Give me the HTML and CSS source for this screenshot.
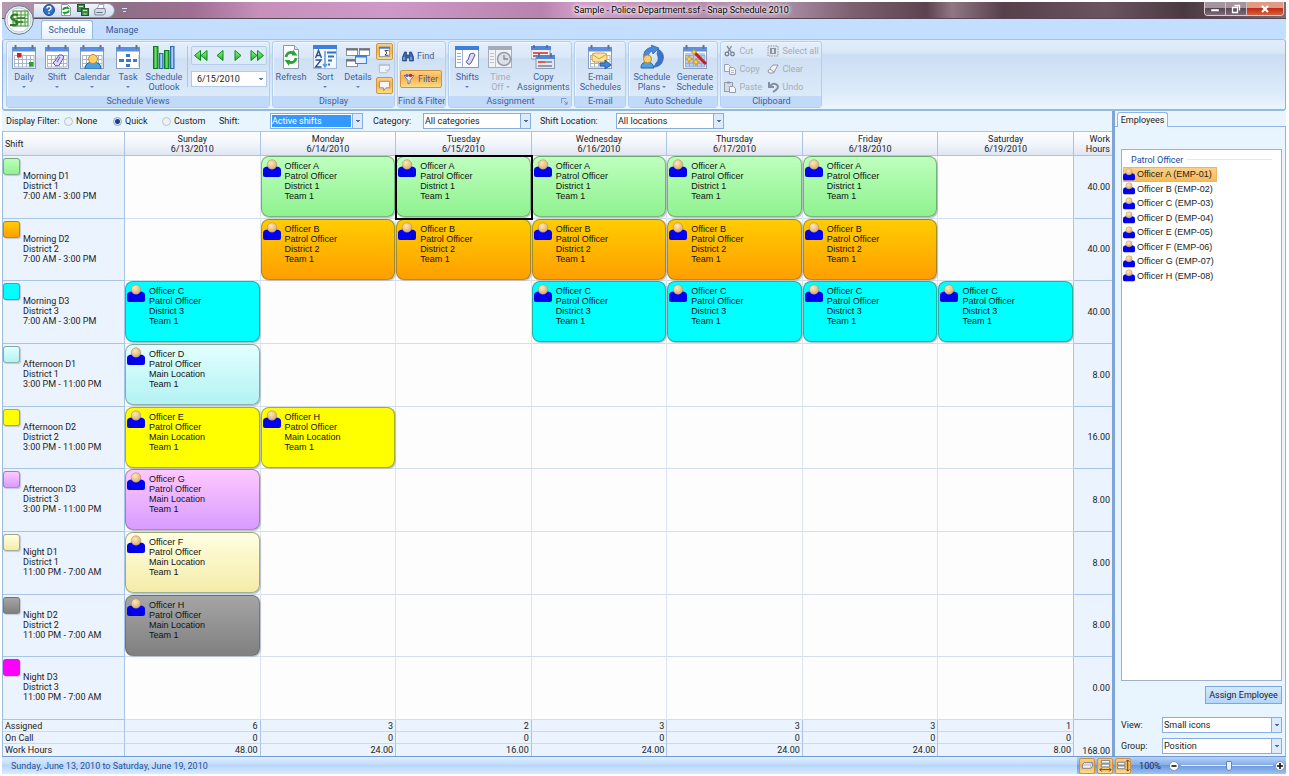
FILE: index.html
```html
<!DOCTYPE html>
<html lang="en">
<head>
<meta charset="utf-8">
<title>Sample - Police Department.ssf - Snap Schedule 2010</title>
<link rel="stylesheet" href="styles.css">
</head>
<body>
<svg class="defs" aria-hidden="true">
  <defs>
    <radialGradient id="skin" cx=".4" cy=".35" r=".7"><stop offset="0" stop-color="#ffe9bd"/><stop offset="1" stop-color="#d9a866"/></radialGradient>
    <linearGradient id="grn" x1="0" x2="0" y1="0" y2="1"><stop offset="0" stop-color="#9af58a"/><stop offset="1" stop-color="#18b02a"/></linearGradient>
    <linearGradient id="grnBar"><stop offset="0" stop-color="#0d9a24"/><stop offset=".5" stop-color="#7be36b"/><stop offset="1" stop-color="#0d8a20"/></linearGradient>
    <linearGradient id="bluBar"><stop offset="0" stop-color="#3b7fd0"/><stop offset=".5" stop-color="#bcdcff"/><stop offset="1" stop-color="#3b7fd0"/></linearGradient>
    <symbol id="person" viewBox="0 0 18 19"><path d="M0 11q0-3 4-3.500h10q4 .5 4 3.500v5q0 2-2 2H2q-2 0-2-2z" fill="#0000f4"/><path d="M3.500 12v6M14.500 12v6" stroke="#0000b0" stroke-width=".7"/><circle cx="9" cy="5.500" r="4.800" fill="url(#skin)" stroke="#a98a60" stroke-width=".5"/></symbol>
    <symbol id="cal" viewBox="0 0 24 24"><rect x=".5" y="2.500" width="23" height="21" fill="#fff" stroke="#8a9cba"/><rect x="0" y="2" width="24" height="4.500" fill="#5b90e4"/><path d="M2 10.500h20M2 14.500h20M2 18.500h20M2 22h20M2.500 10v12M6.500 10v12M10.500 10v12M14.500 10v12M18.500 10v12M22 10v12" stroke="#a9b6ca" fill="none"/><path d="M3.500 0v4M20.500 0v4" stroke="#6d7480" stroke-width="2"/></symbol>
  </defs>
</svg>

<div class="app">
  <header class="titlebar">
    <button class="orb" aria-label="Application menu">
      <svg viewBox="0 0 30 30"><circle cx="15" cy="15" r="14.300" fill="#e9edf3" stroke="#6b7d96"/><circle cx="15" cy="15" r="12" fill="#f9fbfd" stroke="#c3cedb"/><rect x="9" y="6" width="15" height="15" fill="#e7f4df" stroke="#3d8a35"/><path d="M9 10h15M9 13.500h15M9 17h15M13 6v15M17 6v15M21 6v15" stroke="#4f9a45"/><path d="M14 10c-7-2-9 4-4 5s5 6-4 5" fill="none" stroke="#2c7a28" stroke-width="2.200"/><path d="M13 13h8M11 17h8" stroke="#2c7a28" stroke-width="1.500"/></svg>
    </button>
    <div class="quick">
      <button aria-label="Help"><svg viewBox="0 0 12 12"><circle cx="6" cy="6" r="5.500" fill="#2f6fc4" stroke="#1c4b91"/><path d="M4 4.500q0-2 2-2t2 1.800q0 1-2 2.200v.8M6 8.500v1.300" fill="none" stroke="#fff" stroke-width="1.400"/></svg></button>
      <button aria-label="Refresh"><svg viewBox="0 0 12 12"><path d="M1.500.5h6l3 3v8h-9z" fill="#fff" stroke="#8b98aa"/><path d="M3 6q1-3 5-2M9 6.500q-1 3-5 2" fill="none" stroke="#1d9b2c" stroke-width="1.800"/><path d="M7 2l3 3H7zM5 11L2 8h3z" fill="#1d9b2c"/></svg></button>
      <button aria-label="Save all"><svg viewBox="0 0 12 12"><rect x=".5" y=".5" width="7" height="7" fill="#3f8a4a" stroke="#1d5a2a"/><rect x="4.500" y="4.500" width="7" height="7" fill="#3f8a4a" stroke="#1d5a2a"/><path d="M2 2.500h4M6 6.500h4M6.500 10h3" stroke="#c9e8c8"/></svg></button>
      <button aria-label="Print"><svg viewBox="0 0 12 12"><path d="M3 5l2-4.500h5L9 5z" fill="#fff" stroke="#8089a0" stroke-width=".7"/><path d="M.5 6l2-1.500h8.500l.5 4-2 2.500H1z" fill="#d7dbe6" stroke="#6c748c" stroke-width=".8"/><path d="M2.500 8.500h6" stroke="#68708a"/></svg></button>
    </div>
    <span class="quick-more"></span>
    <h1>Sample - Police Department.ssf - Snap Schedule 2010</h1>
    <div class="winbtns">
      <button aria-label="Minimize"><svg viewBox="0 0 10 10"><rect x="1" y="5" width="8" height="2.500" fill="#fff" stroke="#444" stroke-width=".4"/></svg></button>
      <button aria-label="Restore"><svg viewBox="0 0 10 10"><path d="M3.500 1.500h5v5M1.500 3.500h5v5h-5z" fill="none" stroke="#fff" stroke-width="1.300"/></svg></button>
      <button class="close" aria-label="Close"><svg viewBox="0 0 10 10"><path d="M2 2l6 6M8 2L2 8" stroke="#fff" stroke-width="2.200"/></svg></button>
    </div>
  </header>

  <nav class="tabs">
    <button class="active">Schedule</button>
    <button>Manage</button>
  </nav>

  <div class="ribbon">
    <section class="group">
      <div class="tools">
        <button class="big w32"><svg viewBox="0 0 24 24"><use href="#cal"/><rect x="5" y="8" width="4.500" height="4.500" fill="#cf1f1f"/><rect x="17" y="17" width="4.500" height="4.500" fill="#26a32f"/></svg>Daily<i class="arrow"></i></button>
        <button class="big w34"><svg viewBox="0 0 24 24"><use href="#cal"/><path d="M9 19q-2-2 1-3l4-6q4-1 5 2l-4 7q-3 4-6 0zM12 17l3-5" fill="#dcd8fa" stroke="#5a50a8"/></svg>Shift<i class="arrow"></i></button>
        <button class="big w36"><svg viewBox="0 0 24 24"><use href="#cal"/><path d="M5 24q0-7 8-7t8 7z" fill="#4aa3e0" stroke="#235f9f"/><circle cx="13" cy="14" r="4.500" fill="#fbd06a" stroke="#c98a2a"/></svg>Calendar<i class="arrow"></i></button>
        <button class="big w36"><svg viewBox="0 0 24 24"><use href="#cal"/><rect x="2" y="8" width="20" height="15" fill="#fff"/><path d="M3 15.500h18" stroke="#3d78c8" stroke-width="3" stroke-dasharray="5 2"/><rect x="10" y="9" width="4" height="3" fill="#3d78c8"/><rect x="10" y="19" width="4" height="3" fill="#3d78c8"/></svg>Task<i class="arrow"></i></button>
        <button class="big w36"><svg viewBox="0 0 24 24"><rect x="1.500" y="1.500" width="4.500" height="22" fill="url(#grnBar)" stroke="#0b7a1d"/><rect x="7.500" y="8.500" width="3.500" height="15" fill="url(#bluBar)" stroke="#2c68b8"/><rect x="12.500" y="5.500" width="4.500" height="18" fill="url(#grnBar)" stroke="#0b7a1d"/><rect x="18.500" y="1.500" width="3.500" height="22" fill="url(#bluBar)" stroke="#2c68b8"/></svg>Schedule Outlook</button>
        <div class="daynav">
          <div class="steps">
            <button aria-label="Back a week"><svg viewBox="0 0 16 12"><path d="M7.500 1L1.500 6l6 5zM14 1L8 6l6 5z" fill="url(#grn)" stroke="#0a8a1c"/></svg></button>
            <button aria-label="Back a day"><svg viewBox="0 0 16 12"><path d="M11 1L5 6l6 5z" fill="url(#grn)" stroke="#0a8a1c"/></svg></button>
            <button aria-label="Forward a day"><svg viewBox="0 0 16 12"><path d="M5 1l6 5-6 5z" fill="url(#grn)" stroke="#0a8a1c"/></svg></button>
            <button aria-label="Forward a week"><svg viewBox="0 0 16 12"><path d="M2 1l6 5-6 5zM8.500 1l6 5-6 5z" fill="url(#grn)" stroke="#0a8a1c"/></svg></button>
          </div>
          <select class="date" aria-label="Date"><option>6/15/2010</option></select>
        </div>
      </div>
      <h2>Schedule Views</h2>
    </section>

    <section class="group">
      <div class="tools">
        <button class="big w34"><svg viewBox="0 0 24 24"><path d="M4.500.5h11l4 4v19h-15z" fill="#fff" stroke="#8b98aa"/><path d="M15.500.5v4h4" fill="#dfe6f0" stroke="#8b98aa"/><path d="M7 12q1-6 8-4M17 13q-1 6-8 4" fill="none" stroke="#2ba23a" stroke-width="2.800"/><path d="M14 4.500l4.500 6H13zM10 21l-4.500-6H11z" fill="#2ba23a"/></svg>Refresh</button>
        <button class="big w34"><svg viewBox="0 0 24 24"><rect x=".5" y=".5" width="23" height="23" fill="#f5f9ff" stroke="#9db6dc"/><rect width="24" height="4" fill="#3f7fdb"/><path d="M2.500 13l3-7.500 3 7.500M3.500 10.500h4M2.500 15h5.500l-5.500 7h6" fill="none" stroke="#28508c" stroke-width="1.400"/><path d="M12 6v16M10 19l2 3 2-3" stroke="#5a9ade" stroke-width="1.500" fill="none"/><path d="M14 7.500h9M15 11.500h6M15 15.500h4M15 19.500h2" stroke="#2f6fc4" stroke-width="2"/></svg>Sort<i class="arrow"></i></button>
        <button class="big w32"><svg viewBox="0 0 24 24"><g fill="#fff" stroke="#8b8f99"><rect x=".5" y="3.500" width="11" height="7"/><rect x="13.500" y="3.500" width="10" height="7"/><rect x=".5" y="14.500" width="11" height="7"/></g><path d="M0 4.500h12M13 4.500h11M0 15.500h12" stroke="#6f737d" stroke-width="2"/><rect x="9.500" y="10.500" width="11" height="8" fill="#e4f0ff" stroke="#3f7fdb"/><path d="M9 11.500h12" stroke="#3f7fdb" stroke-width="2"/></svg>Details<i class="arrow"></i></button>
        <div class="toggles">
          <button class="on" aria-label="Summary"><svg viewBox="0 0 14 14"><rect x="1.500" y="2.500" width="11" height="10" fill="#fff" stroke="#8896ad"/><path d="M1 3h12" stroke="#3f7fdb" stroke-width="2"/><path d="M11.500 6h-4l2 2.500-2 2.500h4" fill="none" stroke="#333"/></svg></button>
          <button aria-label="Notes"><svg viewBox="0 0 14 14"><path d="M1.500 2.500h11v6l-3 3h-8z" fill="#f0f3f9" stroke="#b0bbcd"/><path d="M1 3.500h12M8 8l1.500 2L12 7" fill="none" stroke="#aab6cb"/></svg></button>
          <button class="on" aria-label="Comments"><svg viewBox="0 0 14 14"><path d="M1.500 2.500h11v7h-4l-2.500 3v-3h-4.500z" fill="#f5f6fb" stroke="#858ca0"/></svg></button>
        </div>
      </div>
      <h2>Display</h2>
    </section>

    <section class="group">
      <div class="tools stack find">
        <button class="small"><svg viewBox="0 0 12 12"><path d="M2.500 2h2v3h3V2h2l2 5v4h-4V8h-3v3h-4V7z" fill="#3c62a8" stroke="#1f3e7c" stroke-width=".7"/><path d="M2 7v3M9 7v3" stroke="#b6cdf0"/></svg>Find</button>
        <button class="small on"><svg viewBox="0 0 12 12"><path d="M1 2.500l4 5v3.500l2-1V7.500l4-5z" fill="#e7edf8" stroke="#53659a" stroke-width=".8"/><circle cx="7.500" cy="2.500" r="1.800" fill="#cf2626"/><circle cx="4" cy="2.500" r="1.600" fill="#3f6fd0"/></svg>Filter</button>
      </div>
      <h2>Find &amp; Filter</h2>
    </section>

    <section class="group">
      <div class="tools">
        <button class="big w34"><svg viewBox="0 0 24 24"><rect x=".5" y="1.500" width="23" height="21" fill="#fff" stroke="#8a9cba"/><rect y="1" width="24" height="4" fill="#3f7fdb"/><path d="M7.500 5v17M2 8.500h4M2 11.500h4M2 14.500h4M2 17.500h4" stroke="#9fb2d0"/><path d="M12 18q-2-2 1-3l2-6q4-2 5 1l-4 8q-2 3-4 0z" fill="#dcd8fa" stroke="#5a50a8"/></svg>Shifts<i class="arrow"></i></button>
        <button class="big w32" disabled><svg viewBox="0 0 24 24"><rect x=".5" y="1.500" width="23" height="21" fill="#f1f3f6" stroke="#a6adb9"/><rect y="1" width="24" height="4" fill="#a3acba"/><path d="M7.500 5v17M2 8.500h4M2 11.500h4M2 14.500h4M2 17.500h4" stroke="#b9c0cb"/><circle cx="16" cy="14" r="6.500" fill="#dde1e7" stroke="#949ca9" stroke-width="1.500"/><path d="M16 10v4h4" fill="none" stroke="#7d8694" stroke-width="1.300"/></svg><span>Time<br>Off<i class="arrow side-arrow"></i></span></button>
        <button class="big w54"><svg viewBox="0 0 24 24"><rect x="0" y="2" width="19" height="12" fill="#eef1f7" stroke="#8a9cba"/><rect y="1" width="20" height="4" fill="#4f86dc"/><path d="M2 8h15M2 11h15" stroke="#e05a50" stroke-width="2"/><rect x="5" y="11" width="18.500" height="12.500" fill="#e4e7ee" stroke="#8a9cba"/><rect x="5" y="10" width="19" height="4" fill="#4f86dc"/><path d="M7 17h14M7 21h14" stroke="#8f9bb0" stroke-width="2"/><path d="M7 17h7" stroke="#e05a50" stroke-width="2"/><path d="M3 0v3M16 0v3M8 8v4M20 8v4" stroke="#596272" stroke-width="1.500"/></svg><span>Copy<br>Assignments</span></button>
      </div>
      <h2>Assignment<svg class="launch" viewBox="0 0 8 8"><path d="M.5 6V.5H6M3.500 3.500l3.500 3.500M7 4v3H4" fill="none" stroke="#6d8ebf"/></svg></h2>
    </section>

    <section class="group">
      <div class="tools">
        <button class="big w48"><svg viewBox="0 0 24 24"><use href="#cal"/><rect x="4" y="8" width="15" height="9" rx="3" fill="#fde3a0" stroke="#d39c3a"/><path d="M4 9l7 5 8-5" fill="none" stroke="#d39c3a"/><path d="M12 18h5v-3l6 5-6 4v-3h-5z" fill="#3f86e0" stroke="#2259a5"/></svg>E-mail Schedules</button>
      </div>
      <h2>E-mail</h2>
    </section>

    <section class="group">
      <div class="tools">
        <button class="big w43"><svg viewBox="0 0 24 24"><path d="M4 14Q2 4 12 2l-1-2 8 3-6 6-1-3q-5 2-3 8z" fill="#4a86dc" stroke="#2a5eb0" stroke-width=".7"/><path d="M18 4q7 4 5 11t-9 7l2-4q4-3 1-9z" fill="#3c74cc" stroke="#2a5eb0" stroke-width=".7"/><path d="M1 23q0-6 6-6t7 6z" fill="#4aa3e0" stroke="#235f9f"/><circle cx="7.500" cy="14" r="4" fill="#fbd06a" stroke="#c98a2a"/></svg><span>Schedule<br>Plans<i class="arrow side-arrow"></i></span></button>
        <button class="big w43"><svg viewBox="0 0 24 24"><use href="#cal"/><rect x="2" y="8" width="20" height="14" fill="#7fa9e8" opacity=".6"/><path d="M10 6l13 13" stroke="#c81e1e" stroke-width="3"/><path d="M6 10l1 3 3 1-3 1-1 3-1-3-3-1 3-1zM13 13l1 3 3 1-3 1-1 3-1-3-3-1 3-1zM11 4l1 2 2 1-2 1-1 2-1-2-2-1 2-1z" fill="#ffd13d" stroke="#d88d12" stroke-width=".7"/></svg>Generate Schedule</button>
      </div>
      <h2>Auto Schedule</h2>
    </section>

    <section class="group">
      <div class="tools clip">
        <button class="small" disabled><svg viewBox="0 0 12 12"><path d="M3 1l4 6M7.500 1L4 7" stroke="#888f9c" stroke-width="1.400"/><circle cx="3" cy="9" r="1.800" fill="none" stroke="#777f8e" stroke-width="1.300"/><circle cx="8.500" cy="9" r="1.800" fill="none" stroke="#777f8e" stroke-width="1.300"/></svg>Cut</button>
        <button class="small" disabled><svg viewBox="0 0 12 12"><rect x="1" y="1" width="10" height="10" fill="#e1e5ec" stroke="#8f96a4" stroke-dasharray="1.500 1"/><rect x="3" y="3" width="6" height="6" fill="#8d95a3"/><path d="M5 4h2v4H5z" fill="#dfe3ea"/></svg>Select all</button>
        <button class="small" disabled><svg viewBox="0 0 12 12"><path d="M.5 1.500h4l2 2v5h-6z" fill="#f0f2f6" stroke="#9aa2b1"/><path d="M5.500 4.500h4l2 2v5h-6z" fill="#f0f2f6" stroke="#9aa2b1"/><path d="M7 7.500h3M7 9.500h3" stroke="#b5bcc8"/></svg>Copy</button>
        <button class="small" disabled><svg viewBox="0 0 12 12"><path d="M1 8l5-6h5L6.500 10H2z" fill="#f1f3f7" stroke="#8f97a6"/><path d="M3 6l4 3" stroke="#8f97a6"/></svg>Clear</button>
        <button class="small" disabled><svg viewBox="0 0 12 12"><rect x=".5" y="1.500" width="8" height="9" fill="#d6dae2" stroke="#959dac"/><rect x="3" y=".5" width="3" height="2" fill="#8d95a3"/><path d="M5.500 5.500h4l2 2v4h-6z" fill="#f4f5f8" stroke="#959dac"/></svg>Paste</button>
        <button class="small" disabled><svg viewBox="0 0 12 12"><path d="M2 1v5h5" fill="none" stroke="#858da0" stroke-width="2"/><path d="M3 5q4-4 7-1t-4 7" fill="none" stroke="#858da0" stroke-width="2"/></svg>Undo</button>
      </div>
      <h2>Clipboard</h2>
    </section>
  </div>

  <main class="work">
    <div class="board">
      <form class="filters">
        <span class="f-title">Display Filter:</span>
        <label class="f-radio"><input type="radio" name="df">None</label>
        <label class="f-radio"><input type="radio" name="df" checked>Quick</label>
        <label class="f-radio last"><input type="radio" name="df">Custom</label>
        <label class="f-drop"><span class="l-shift">Shift:</span><span class="combo"><select class="picked"><option>Active shifts</option></select></span></label>
        <label class="f-drop"><span class="l-cat">Category:</span><span class="combo wide"><select><option>All categories</option></select></span></label>
        <label class="f-drop"><span class="l-loc">Shift Location:</span><span class="combo wide"><select><option>All locations</option></select></span></label>
      </form>

      <table class="grid">
        <colgroup><col class="c-shift"><col span="7"><col class="c-hours"></colgroup>
        <thead>
          <tr><th class="left">Shift</th><th>Sunday<br>6/13/2010</th><th>Monday<br>6/14/2010</th><th>Tuesday<br>6/15/2010</th><th>Wednesday<br>6/16/2010</th><th>Thursday<br>6/17/2010</th><th>Friday<br>6/18/2010</th><th>Saturday<br>6/19/2010</th><th class="right">Work<br>Hours</th></tr>
        </thead>
        <tbody>
          <tr class="green">
            <th><div class="shift"><i class="swatch"></i><p>Morning D1<br>District 1<br>7:00 AM - 3:00 PM</p></div></th>
            <td></td>
            <td><div class="card"><svg><use href="#person"/></svg><p>Officer A<br>Patrol Officer<br>District 1<br>Team 1</p></div></td>
            <td class="selected"><div class="card"><svg><use href="#person"/></svg><p>Officer A<br>Patrol Officer<br>District 1<br>Team 1</p></div></td>
            <td><div class="card"><svg><use href="#person"/></svg><p>Officer A<br>Patrol Officer<br>District 1<br>Team 1</p></div></td>
            <td><div class="card"><svg><use href="#person"/></svg><p>Officer A<br>Patrol Officer<br>District 1<br>Team 1</p></div></td>
            <td><div class="card"><svg><use href="#person"/></svg><p>Officer A<br>Patrol Officer<br>District 1<br>Team 1</p></div></td>
            <td></td>
            <td class="hours">40.00</td>
          </tr>
          <tr class="orange">
            <th><div class="shift"><i class="swatch"></i><p>Morning D2<br>District 2<br>7:00 AM - 3:00 PM</p></div></th>
            <td></td>
            <td><div class="card"><svg><use href="#person"/></svg><p>Officer B<br>Patrol Officer<br>District 2<br>Team 1</p></div></td>
            <td><div class="card"><svg><use href="#person"/></svg><p>Officer B<br>Patrol Officer<br>District 2<br>Team 1</p></div></td>
            <td><div class="card"><svg><use href="#person"/></svg><p>Officer B<br>Patrol Officer<br>District 2<br>Team 1</p></div></td>
            <td><div class="card"><svg><use href="#person"/></svg><p>Officer B<br>Patrol Officer<br>District 2<br>Team 1</p></div></td>
            <td><div class="card"><svg><use href="#person"/></svg><p>Officer B<br>Patrol Officer<br>District 2<br>Team 1</p></div></td>
            <td></td>
            <td class="hours">40.00</td>
          </tr>
          <tr class="cyan">
            <th><div class="shift"><i class="swatch"></i><p>Morning D3<br>District 3<br>7:00 AM - 3:00 PM</p></div></th>
            <td><div class="card"><svg><use href="#person"/></svg><p>Officer C<br>Patrol Officer<br>District 3<br>Team 1</p></div></td>
            <td></td>
            <td></td>
            <td><div class="card"><svg><use href="#person"/></svg><p>Officer C<br>Patrol Officer<br>District 3<br>Team 1</p></div></td>
            <td><div class="card"><svg><use href="#person"/></svg><p>Officer C<br>Patrol Officer<br>District 3<br>Team 1</p></div></td>
            <td><div class="card"><svg><use href="#person"/></svg><p>Officer C<br>Patrol Officer<br>District 3<br>Team 1</p></div></td>
            <td><div class="card"><svg><use href="#person"/></svg><p>Officer C<br>Patrol Officer<br>District 3<br>Team 1</p></div></td>
            <td class="hours">40.00</td>
          </tr>
          <tr class="pale">
            <th><div class="shift"><i class="swatch"></i><p>Afternoon D1<br>District 1<br>3:00 PM - 11:00 PM</p></div></th>
            <td><div class="card"><svg><use href="#person"/></svg><p>Officer D<br>Patrol Officer<br>Main Location<br>Team 1</p></div></td>
            <td></td><td></td><td></td><td></td><td></td><td></td>
            <td class="hours">8.00</td>
          </tr>
          <tr class="yellow">
            <th><div class="shift"><i class="swatch"></i><p>Afternoon D2<br>District 2<br>3:00 PM - 11:00 PM</p></div></th>
            <td><div class="card"><svg><use href="#person"/></svg><p>Officer E<br>Patrol Officer<br>Main Location<br>Team 1</p></div></td>
            <td><div class="card"><svg><use href="#person"/></svg><p>Officer H<br>Patrol Officer<br>Main Location<br>Team 1</p></div></td>
            <td></td><td></td><td></td><td></td><td></td>
            <td class="hours">16.00</td>
          </tr>
          <tr class="violet">
            <th><div class="shift"><i class="swatch"></i><p>Afternoon D3<br>District 3<br>3:00 PM - 11:00 PM</p></div></th>
            <td><div class="card"><svg><use href="#person"/></svg><p>Officer G<br>Patrol Officer<br>Main Location<br>Team 1</p></div></td>
            <td></td><td></td><td></td><td></td><td></td><td></td>
            <td class="hours">8.00</td>
          </tr>
          <tr class="cream">
            <th><div class="shift"><i class="swatch"></i><p>Night D1<br>District 1<br>11:00 PM - 7:00 AM</p></div></th>
            <td><div class="card"><svg><use href="#person"/></svg><p>Officer F<br>Patrol Officer<br>Main Location<br>Team 1</p></div></td>
            <td></td><td></td><td></td><td></td><td></td><td></td>
            <td class="hours">8.00</td>
          </tr>
          <tr class="grey">
            <th><div class="shift"><i class="swatch"></i><p>Night D2<br>District 2<br>11:00 PM - 7:00 AM</p></div></th>
            <td><div class="card"><svg><use href="#person"/></svg><p>Officer H<br>Patrol Officer<br>Main Location<br>Team 1</p></div></td>
            <td></td><td></td><td></td><td></td><td></td><td></td>
            <td class="hours">8.00</td>
          </tr>
          <tr class="magenta">
            <th><div class="shift"><i class="swatch"></i><p>Night D3<br>District 3<br>11:00 PM - 7:00 AM</p></div></th>
            <td></td><td></td><td></td><td></td><td></td><td></td><td></td>
            <td class="hours">0.00</td>
          </tr>
        </tbody>
        <tfoot>
          <tr><th>Assigned</th><td>6</td><td>3</td><td>2</td><td>3</td><td>3</td><td>3</td><td>1</td><td rowspan="3" class="total">168.00</td></tr>
          <tr><th>On Call</th><td>0</td><td>0</td><td>0</td><td>0</td><td>0</td><td>0</td><td class="sat">0</td></tr>
          <tr><th>Work Hours</th><td>48.00</td><td>24.00</td><td>16.00</td><td>24.00</td><td>24.00</td><td>24.00</td><td class="sat">8.00</td></tr>
        </tfoot>
      </table>
    </div>

    <aside class="side">
      <div class="side-tabs"><button>Employees</button></div>
      <div class="side-body">
        <div class="list">
          <h3>Patrol Officer</h3>
          <ul>
            <li class="on"><svg><use href="#person"/></svg>Officer A (EMP-01)</li>
            <li><svg><use href="#person"/></svg>Officer B (EMP-02)</li>
            <li><svg><use href="#person"/></svg>Officer C (EMP-03)</li>
            <li><svg><use href="#person"/></svg>Officer D (EMP-04)</li>
            <li><svg><use href="#person"/></svg>Officer E (EMP-05)</li>
            <li><svg><use href="#person"/></svg>Officer F (EMP-06)</li>
            <li><svg><use href="#person"/></svg>Officer G (EMP-07)</li>
            <li><svg><use href="#person"/></svg>Officer H (EMP-08)</li>
          </ul>
        </div>
        <button class="assign">Assign Employee</button>
        <div class="fields">
          <label class="field"><span>View:</span><span class="combo"><select><option>Small icons</option></select></span></label>
          <label class="field"><span>Group:</span><span class="combo"><select><option>Position</option></select></span></label>
        </div>
      </div>
    </aside>
  </main>

  <footer class="status">
    <span class="range">Sunday, June 13, 2010 to Saturday, June 19, 2010</span>
    <div class="zoombar">
      <button class="on" aria-label="Normal size"><svg viewBox="0 0 14 14"><path d="M1.500 6l2-2h9v4l-2 2h-9z" fill="#f3f5fa" stroke="#737b8d"/><path d="M1.500 6.500h9v3M10.500 6l2-2" fill="none" stroke="#a3aabb"/></svg></button>
      <button class="on" aria-label="Fit width"><svg viewBox="0 0 14 14"><path d="M2.500 1.500h9v3h-9zM2.500 5.500h9v3h-9z" fill="#f3f5fa" stroke="#737b8d"/><path d="M1 11.500h12M3 9.500l-2 2 2 2M11 9.500l2 2-2 2" fill="none" stroke="#444"/></svg></button>
      <button class="on" aria-label="Fit height"><svg viewBox="0 0 14 14"><path d="M.5 3.500h8v3h-8zM.5 7.500h8v3h-8z" fill="#f3f5fa" stroke="#737b8d"/><path d="M11.500 1v12M9.500 3l2-2 2 2M9.500 11l2 2 2-2" fill="none" stroke="#444"/></svg></button>
      <span class="pct">100%</span>
      <button class="round" aria-label="Zoom out"><svg viewBox="0 0 10 10"><circle cx="5" cy="5" r="4.500" fill="#fff" stroke="#7d97c4"/><path d="M2.500 5h5" stroke="#111" stroke-width="1.600"/></svg></button>
      <input type="range" aria-label="Zoom" min="0" max="100" value="52">
      <button class="round" aria-label="Zoom in"><svg viewBox="0 0 10 10"><circle cx="5" cy="5" r="4.500" fill="#fff" stroke="#7d97c4"/><path d="M2 5h6M5 2v6" stroke="#111" stroke-width="1.600"/></svg></button>
    </div>
  </footer>
</div>
</body>
</html>
```
FILE: styles.css
```css
* { box-sizing: border-box; }
body { margin: 0; background: #fff; font: 9px/10px Roboto, "Noto Sans", sans-serif; color: #1c1c1c; }
button, select, input { font: inherit; color: inherit; margin: 0; padding: 0; }
button { background: none; border: 0; }
h1, h2, h3, p, ul { margin: 0; padding: 0; font: inherit; }
ul { list-style: none; }
select { appearance: none; border-radius: 0; }
svg { display: block; flex: none; }
.defs { position: absolute; width: 0; height: 0; }
.app { min-height: 100vh; padding: 2px; padding-right: 3px; display: flex; flex-direction: column; background: #fff; }

/* title bar */
.titlebar { position: relative; height: 17px; display: flex; align-items: center; padding-left: 32px; border-bottom: 1px solid #5a4652;
  background: linear-gradient(90deg, #b59bb0 0, #8d6f86 9%, #a06f94 15%, #c690b9 20%, #cd99c8 30%, #b784ad 42%, #d2a0cb 45%, #b78bb0 54%, #b396b0 60%, #7d6272 66%, #5b4450 72%, #8f7785 74%, #56404a 78%, #6a5460 86%, #4b3940 92%, #7a6b78 100%); }
.orb { position: absolute; left: 2px; top: 3px; z-index: 2; width: 30px; height: 30px; }
.quick { height: 15px; display: flex; align-items: center; gap: 5px; padding: 0 8px 0 9px; background: linear-gradient(#f1f3fa, #cfdcf0); border: 1px solid #8b93ae; border-left: 0; border-radius: 0 8px 8px 0; }
.quick svg { width: 12px; height: 12px; }
.quick-more { width: 5px; margin-left: 7px; height: 5px; border-top: 1px solid #d5e1f5; background: linear-gradient(#d5e1f5, #d5e1f5) 50% 2px / 3px 1px no-repeat; }
.titlebar h1 { flex: 1; text-align: center; padding-left: 32px; line-height: 14px; color: #000; text-shadow: 0 0 5px #fff, 0 0 5px #fff, 0 0 3px #fff; }
.winbtns { display: flex; align-self: flex-start; margin-right: 2px; border: 1px solid #d9ccd6; border-top: 0; border-radius: 0 0 4px 4px; overflow: hidden; }
.winbtns button { width: 21px; height: 13px; display: grid; place-items: center; border-right: 1px solid #cdbfca; background: linear-gradient(#a394a0 45%, #5a4854 50%, #7d6c79); }
.winbtns button.close { width: 36px; border: 0; background: linear-gradient(#e09a88 45%, #bf2d14 50%, #d8603c); }
.winbtns svg { width: 10px; height: 10px; }

/* tabs and ribbon */
.tabs { height: 20px; display: flex; align-items: flex-end; gap: 3px; padding-left: 39px; background: #c3deff; color: #35599a; }
.tabs button { width: 52px; height: 19px; }
.tabs button.active { background: linear-gradient(#fff, #e6f1fd); border: 1px solid #95b9e6; border-bottom: 0; border-radius: 3px 3px 0 0; }
.ribbon { display: flex; gap: 2px; height: 72px; padding: 1px 3px; border: 1px solid #8db2e3; border-top-color: #a3c3ec; border-bottom: 2px solid #94b9dd; border-radius: 3px; background: linear-gradient(#e0edfb 0, #d9e8f9 18%, #cbddf3 22%, #dcebfa 75%, #eaf6ff); color: #3d5f9c; }
.group { display: flex; flex-direction: column; border: 1px solid #b4cfee; border-radius: 3px; overflow: hidden; background: linear-gradient(#e3effc 0, #dbe8f8 22%, #cfe0f4 26%, #e0eefb); box-shadow: inset 1px 1px #eef6ff; }
.group h2 { position: relative; flex: none; height: 11px; line-height: 11px; text-align: center; background: #c1dafa; white-space: nowrap; }
.launch { position: absolute; right: 3px; top: 2px; width: 7px; height: 7px; }
.tools { flex: 1; display: flex; align-items: flex-start; padding: 1px 1px 0; }
.big { display: flex; flex-direction: column; align-items: center; height: 52px; padding-top: 2px; }
.big svg { width: 24px; height: 24px; margin-bottom: 3px; }
.w32 { width: 32px; }
.w34 { width: 34px; }
.w36 { width: 36px; }
.w43 { width: 43px; }
.w48 { width: 48px; }
.w54 { width: 54px; }
.w54 span { white-space: nowrap; }
.arrow { width: 0; height: 0; margin-top: 4px; border: 2px solid transparent; border-top: 2px solid #5b7fb8; border-bottom: 0; }
.side-arrow { display: inline-block; margin: 0 0 0 2px; vertical-align: 2px; }
button:disabled { color: #a9adb3; }
button:disabled .arrow { border-top-color: #a9adb3; }
.daynav { margin: 3px 1px 0 5px; padding-left: 3px; border-left: 1px solid #a9c5e8; display: flex; flex-direction: column; gap: 6px; }
.steps { display: flex; justify-content: space-between; width: 76px; height: 19px; padding: 2px 1px; border: 1px solid #b5cdec; border-radius: 2px; background: #dceafa; }
.steps svg { width: 16px; height: 13px; }
.date { width: 76px; height: 16px; padding-left: 5px; color: #222; border: 1px solid #b3cbea; background: linear-gradient(#5b7fb8, #5b7fb8) calc(100% - 3px) 6px / 4px 1px no-repeat, linear-gradient(#5b7fb8, #5b7fb8) calc(100% - 4px) 7px / 2px 1px no-repeat, #fff; }
.toggles { display: flex; flex-direction: column; margin-left: 2px; }
.toggles button { width: 17px; height: 17px; display: grid; place-items: center; }
.toggles svg, .zoombar .on svg { width: 13px; height: 13px; }
.on { border: 1px solid #cf9440; border-radius: 2px; background: linear-gradient(#fcd087, #fbb24c 45%, #ffdc85); }
.stack { flex-direction: column; gap: 5px; }
.find { padding: 5px 2px 0; }
.small { display: flex; align-items: center; gap: 3px; height: 18px; padding: 0 2px; }
.small svg { width: 12px; height: 12px; }
.small.on { width: 42px; }
.clip { display: grid; grid-template-columns: 43px 56px; grid-auto-rows: 18px; padding: 0 0 0 1px; }

/* work area */
.work { flex: 1; display: grid; grid-template-columns: 1fr 174px; background: #e9f5fe; }
.board { display: flex; flex-direction: column; }
.filters { display: flex; align-items: center; height: 20px; padding-left: 4px; white-space: nowrap; }
.f-title { width: 58px; }
.f-radio { display: flex; align-items: center; gap: 3px; width: 49px; }
.f-radio.last { width: 57px; }
.f-radio input { appearance: none; width: 9px; height: 9px; border: 1px solid #b9c3d0; border-radius: 50%; background: #eef1f4; }
.f-radio input:checked { border-color: #8fa6c6; background: radial-gradient(#1d3f7c 0 2px, #dbe6f3 3px); }
.f-drop { display: flex; align-items: center; }
.l-shift { width: 51px; }
.l-cat { width: 60px; padding-left: 10px; }
.l-loc { width: 85px; padding-left: 9px; }
.combo { position: relative; display: block; width: 93px; }
.combo.wide { width: 108px; }
.combo select { display: block; width: 100%; height: 16px; padding-left: 1px; border: 1px solid #88addf; background: #fff; }
.combo select.picked { color: #fff; background: linear-gradient(#3399ff, #3399ff) 1px 1px / calc(100% - 12px) calc(100% - 2px) no-repeat #fff; }
.combo::after { content: ""; position: absolute; right: 1px; top: 1px; bottom: 1px; width: 9px; border-left: 1px solid #88addf; pointer-events: none; background: linear-gradient(#4d6fa8, #4d6fa8) 50% 6px / 4px 1px no-repeat, linear-gradient(#4d6fa8, #4d6fa8) 50% 7px / 2px 1px no-repeat, #dceafb; }

/* schedule grid */
.grid { flex: 1; width: 100%; height: 100%; table-layout: fixed; border-collapse: separate; border-spacing: 0; border-left: 1px solid #9dbbdc; background: #fdfdfd; }
.c-shift { width: 122px; }
.c-hours { width: 38px; }
.grid th, .grid td { padding: 0; font-weight: normal; border-right: 1px solid #dde5f2; border-bottom: 1px solid #d3deee; vertical-align: top; }
.grid thead th { height: 25px; vertical-align: middle; background: linear-gradient(#fff, #f2f5fa 50%, #e0e6f2); border-top: 1px solid #a9c4e4; border-right-color: #a9c4e4; border-bottom-color: #a9c4e4; }
.grid thead th.left { text-align: left; padding-left: 2px; }
.grid thead th.right { text-align: right; padding-right: 2px; }
.grid tbody tr { height: 62px; }
.grid tbody th, .grid tfoot th, .grid tfoot td { background: #eaf3fe; border-color: #a9c4e4; text-align: left; }
.grid tbody td:nth-last-child(2) { border-right-color: #a9c4e4; }
.grid .hours { vertical-align: middle; text-align: right; padding-right: 2px; background: #eaf3fe; border-color: #a9c4e4; }
.grid th:last-child, .grid td:last-child { border-right: 0; }
.grid tfoot td.sat { border-right: 1px solid #a9c4e4; }
.grid tfoot th, .grid tfoot td { height: 12px; border-bottom-color: #c9daee; padding: 1px 2px 0; }
.grid tfoot td { text-align: right; }
.grid tfoot td.total { vertical-align: bottom; }
.grid tfoot tr:last-child > *, .grid tfoot td.total { border-bottom: 0; }
.shift { display: flex; gap: 3px; padding-top: 2px; white-space: nowrap; }
.shift p { padding-top: 13px; }
.swatch { width: 17px; height: 17px; flex: none; border: 1px solid rgba(90, 110, 110, .55); border-radius: 3px; background: var(--fill); box-shadow: 1px 1px 1px #c3cad4; }
.card { display: flex; gap: 4px; height: 61px; padding: 2px 1px; border: 1px solid rgba(70, 100, 80, .5); border-radius: 8px; background: var(--fill); box-shadow: 1px 1px 1px #b9bcc4; color: #111; font-family: "Liberation Sans", Arial, sans-serif; }
.card svg { width: 18px; height: 19px; }
.card p { padding-top: 2px; }
.selected { outline: 2px solid #000; outline-offset: -1px; }
.green { --fill: linear-gradient(#bdffbd, #8ff28f); }
.orange { --fill: linear-gradient(#ffcc00, #ff9f00); }
.cyan { --fill: #00ffff; }
.pale { --fill: linear-gradient(#e2ffff, #b3f2f3); }
.yellow { --fill: #ffff00; }
.violet { --fill: linear-gradient(#ffc8ff, #d79cff); }
.cream { --fill: linear-gradient(#ffffe1, #f5eba8); }
.grey { --fill: linear-gradient(#a5a5a5, #808080); }
.magenta { --fill: #ff00ff; }

/* employees panel */
.side { display: flex; flex-direction: column; border-left: 3px solid #7fa5d8; }
.side-tabs { display: flex; height: 16px; padding: 1px 0 0 2px; border-bottom: 1px solid #8fb5ea; }
.side-tabs button { width: 51px; height: 15px; background: linear-gradient(#fff, #e7f2fd); border: 1px solid #8fb5ea; border-bottom: 0; border-radius: 3px 3px 0 0; }
.side-body { flex: 1; display: flex; flex-direction: column; padding: 22px 3px 2px 6px; border-right: 1px solid #8fb5ea; }
.list { flex: 1; border: 1px solid #9fb0c8; background: #fff; padding: 3px 1px; margin-bottom: 5px; }
.list h3 { display: flex; align-items: center; gap: 4px; height: 13px; padding: 0 8px; color: #2348a8; }
.list h3::after { content: ""; flex: 1; height: 1px; background: #dfe8f6; }
.list ul { display: flex; flex-direction: column; height: 116px; margin-top: 1px; }
.list li { flex: 1; display: flex; align-items: center; gap: 2px; width: 94px; font-family: "Liberation Sans", Arial, sans-serif; white-space: nowrap; }
.list li svg { width: 12px; height: 13px; }
.list li.on { border: 0; border-radius: 0; background: linear-gradient(#fbd28a, #f8b956); box-shadow: inset 0 0 0 1px #f2b25e; }
.assign { align-self: flex-end; width: 77px; height: 18px; margin-bottom: 13px; border: 1px solid #7fa7dc; background: linear-gradient(#d5e8fd, #b5d5fb); }
.fields { display: flex; flex-direction: column; gap: 5px; }
.field { display: flex; align-items: center; height: 16px; }
.field > span:first-child { width: 41px; }
.field .combo { flex: 1; width: auto; }

/* status bar */
.status { display: flex; height: 18px; border-top: 1px solid #6f9bd3; background: linear-gradient(#e1eefd, #c5defc 40%, #b8d6fb 50%, #d9ebfe); color: #24509a; }
.range { flex: 1; padding: 4px 0 0 9px; }
.zoombar { display: flex; align-items: center; gap: 2px; width: 209px; padding: 0 1px 0 2px; background: linear-gradient(#b7d2f7, #86aee8 45%, #6c99dd 50%, #9dc1f2); }
.zoombar .on { width: 16px; height: 16px; display: grid; place-items: center; }
.pct { width: 34px; text-align: center; color: #112a5c; }
.round svg { width: 10px; height: 10px; }
.zoombar input { appearance: none; flex: 1; min-width: 0; height: 12px; background: linear-gradient(#e3effd, #e3effd) 0 50% / 100% 1px no-repeat; }
.zoombar input::-webkit-slider-thumb { appearance: none; width: 6px; height: 10px; border: 1px solid #6382b5; border-radius: 1px 1px 3px 3px; background: #e8f0fc; }
```
